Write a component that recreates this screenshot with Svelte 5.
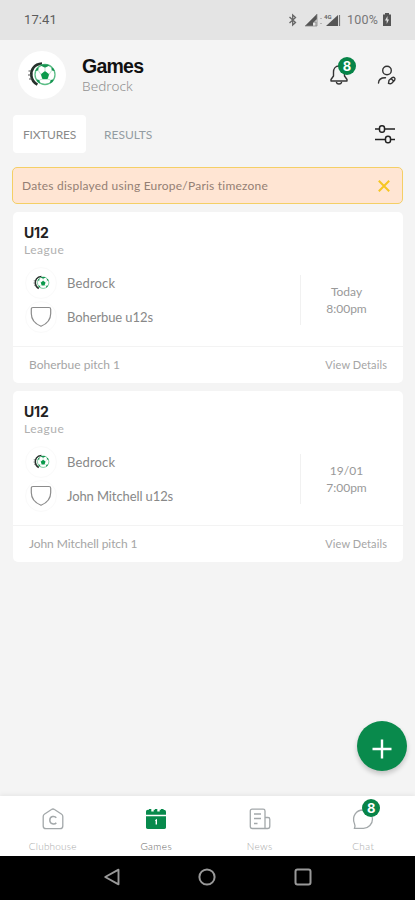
<script>
  const games = [
    { away: 'Boherbue u12s', day: 'Today', time: '8:00pm', pitch: 'Boherbue pitch 1', awaySpacing: -0.1, pitchSpacing: 0 },
    { away: 'John Mitchell u12s', day: '19/01', time: '7:00pm', pitch: 'John Mitchell pitch 1', awaySpacing: -0.1, pitchSpacing: -0.08 }
  ];
</script>

{#snippet ball(size)}
  <svg width={size} height={size} viewBox="0 0 28 28" fill="none">
    <path d="M13 2.600C5 3 1.500 9 2.400 15c.5 4 3 7 6 8.600" stroke="#26302b" stroke-width="2.600" />
    <path d="M2 10H-.5M2 14h-3M3 18H0" stroke="#555" stroke-width="1" />
    <circle cx="16" cy="13.500" r="10" fill="#fff" stroke="#5bbd86" stroke-width="1.300" />
    <path d="m16 10 4.200 3.300-1.600 5h-5.200l-1.600-5z" fill="#0a9a4b" />
    <path d="M11.500 4.500 16 6.700l4.500-2.200-2-1h-5zM6.300 10l3-.5.3-3-2 .9zM25.700 10l-3-.5-.3-3 2 .9zM7.500 18.500l3 .5.5 3.500-2.500-1.500zM24.500 18.500l-3 .5-.5 3.500 2.500-1.500z" fill="#169451" />
    <path d="M16 6.700v3.800M9.300 9.500l2.700 4M22.700 9.500l-2.700 4M10.500 19l3-1M21.500 19l-3-1" stroke="#a9dabd" stroke-width=".8" />
  </svg>
{/snippet}

<div class="screen">
  <div class="status">
    <span class="clock">17:41</span>
    <div class="indicators">
      <svg width="10" height="14" viewBox="0 0 10 14" fill="none" stroke="#666" stroke-width="1.300"><path d="m1.500 4 6 5.500L4.700 12V2l2.800 2.500-6 5.500" /></svg>
      <svg class="signal" width="38" height="14" viewBox="0 0 38 14">
        <path d="M1 13 13 1v5l-4 4v3z" fill="#555" /><path d="M1 13 13 1v12z" fill="none" stroke="#888" stroke-width=".8" />
        <path d="M10 9h2v4M17 5v1M17 10v1" stroke="#888" fill="none" />
        <path d="M22 13 34 2v11z" fill="#555" /><path d="M35.500 2v11" stroke="#777" stroke-width="1.200" />
        <text x="20" y="5.500" font-size="6" font-weight="700" fill="#666">4G</text>
      </svg>
      <span class="percent">100%</span>
      <svg width="10" height="14" viewBox="0 0 10 14"><path d="M3 0h4v1.500h2V13H1V1.500h2z" fill="#555" /><path d="M5.500 3 3 7.500h1.700V11L7 6.500H5.500z" fill="#e4e4e4" /></svg>
    </div>
  </div>

  <header>
    <div class="avatar">{@render ball(28)}</div>
    <div class="title">
      <h1>Games</h1>
      <p>Bedrock</p>
    </div>
    <div class="bell">
      <svg width="20" height="22" viewBox="0 0 20 22" fill="none" stroke="#333" stroke-width="1.400" stroke-linecap="round" stroke-linejoin="round"><path d="M10 2C6.200 2 4.500 5 4.500 8v4L2 15.500V17h16v-1.500L15.500 12V8c0-3-1.700-6-5.500-6z" /><path d="M7.500 18.500c.5 2 4.500 2 5 0" /></svg>
      <span class="badge">8</span>
    </div>
    <svg class="user" width="20" height="20" viewBox="0 0 20 20" fill="none" stroke="#333" stroke-width="1.400" stroke-linecap="round"><circle cx="10" cy="5.500" r="4.300" /><path d="M1.500 18c.2-3.500 3.200-5.300 7-5.200M11.500 18.300l.5-3 3.200-2.700c1.700-1 3.500.8 2.500 2.400L15 18c-1 .8-2.500.8-3.500.3zM14 13.500l2.800 2.800" /></svg>
  </header>

  <nav class="tabs">
    <span class="tab active">FIXTURES</span>
    <span class="tab">RESULTS</span>
    <svg width="20" height="20" viewBox="0 0 20 20" fill="none" stroke="#222" stroke-width="1.500"><path d="M0 5h4.500M9.500 5H20M0 15.500h10.500M15.500 15.500H20" /><rect x="4.500" y="1.800" width="5" height="6.400" rx="2.300" /><rect x="10.500" y="12.300" width="5" height="6.400" rx="2.300" /></svg>
  </nav>

  <div class="notice">
    <span>Dates displayed using Europe/Paris timezone</span>
    <svg width="12" height="12" viewBox="0 0 12 12" stroke="#f6c623" stroke-width="2"><path d="m.8.800 10.400 10.400M11.200.8.800 11.200" /></svg>
  </div>

  <main>
    {#each games as game}
      <article>
        <h2>U12</h2>
        <p class="league">League</p>
        <div class="match">
          <div class="teams">
            <div class="team"><span class="crest small">{@render ball(16)}</span><span class="home">Bedrock</span></div>
            <div class="team">
              <span class="crest"><svg width="22" height="22" viewBox="0 0 22 22" fill="none" stroke="#8c8c8c" stroke-width="1.200"><path d="M3 1.500h16c1.200 0 1.700.6 1.700 1.700v4.300c0 6-4.200 10.500-9.700 12.800C5.500 18 1.300 13.500 1.300 7.500V3.200C1.300 2.100 1.800 1.500 3 1.500z" /></svg></span>
              <span style:letter-spacing="{game.awaySpacing}px">{game.away}</span>
            </div>
          </div>
          <div class="when"><span>{game.day}</span><span>{game.time}</span></div>
        </div>
        <footer><span style:letter-spacing="{game.pitchSpacing}px">{game.pitch}</span><span class="details">View Details</span></footer>
      </article>
    {/each}
  </main>

  <button class="add" aria-label="Add"><svg width="20" height="20" viewBox="0 0 20 20" stroke="#fff" stroke-width="2.400"><path d="M10 .5v19M.5 10h19" /></svg></button>

  <nav class="bottom">
    <div class="item clubhouse">
      <svg width="22" height="22" viewBox="0 0 22 22" fill="none" stroke="#a3a8aa" stroke-width="1.300"><path d="M9.500 1.500 2.300 6.300C1.500 6.800 1.200 7.500 1.200 8.500V18c0 1.700 1 2.700 2.700 2.700h14.200c1.700 0 2.700-1 2.700-2.700V8.500c0-1-.3-1.700-1.100-2.200l-7.200-4.800c-1-.7-2-.7-3 0z" /><path d="M14.300 9.700c-1.500-2-6.500-1.800-6.500 2.500s5 4.500 6.500 2.500" stroke-width="1.500" /></svg>
      <span>Clubhouse</span>
    </div>
    <div class="item current">
      <svg width="22" height="22" viewBox="0 0 22 22" fill="#078a4c"><path d="M1 4c0-1.500.7-2.200 2-2.200h1V1h2.300v2.500h2.400V1.800H10V1h2.300v2.500h2.400V1.800H16V1h2.500v.8c1.700 0 2.500.7 2.500 2.200v2.800H1z" /><path d="M1 8.300h20v11c0 1-.6 1.700-1.700 1.700H2.700C1.600 21 1 20.300 1 19.300z" /><path d="m10.300 12.700 1-.7v4.500" fill="none" stroke="#fff" stroke-width="1.400" /></svg>
      <span>Games</span>
    </div>
    <div class="item">
      <svg width="22" height="22" viewBox="0 0 22 22" fill="none" stroke="#a3a8aa" stroke-width="1.300"><path d="M16 20.500H3.300c-1.400 0-2-.7-2-2V3c0-1.200.6-1.800 1.800-1.800h11.100c1.200 0 1.800.6 1.800 1.800v17.500zM16 9.500h3c1.200 0 1.800.6 1.800 1.800v7c0 1.400-.8 2.200-2.200 2.200H16" /><path d="M5 6h7M5 10.500h7M5 15.500h3.500" stroke-width="1.500" /></svg>
      <span>News</span>
    </div>
    <div class="item">
      <div class="chat">
        <svg width="22" height="22" viewBox="0 0 22 22" fill="none" stroke="#a3a8aa" stroke-width="1.300"><path d="M2.500 20.300c.7-2 .7-3.300-.2-5.300C-.2 8.500 4 2 11 2c5.500 0 9.500 4 9.500 9s-4 9.300-9 9.300z" /></svg>
        <span class="badge">8</span>
      </div>
      <span>Chat</span>
    </div>
  </nav>

  <div class="system">
    <svg width="16" height="18" viewBox="0 0 16 18" fill="none" stroke="#999" stroke-width="1.900" stroke-linejoin="round"><path d="M14.500 1.700v14.600L1.200 9z" /></svg>
    <svg width="18" height="18" viewBox="0 0 18 18" fill="none" stroke="#999" stroke-width="2"><circle cx="9" cy="9" r="7.600" /></svg>
    <svg width="18" height="18" viewBox="0 0 18 18" fill="none" stroke="#999" stroke-width="2"><rect x="1.500" y="1.500" width="15" height="15" rx="2" /></svg>
  </div>
</div>

<style>
  :global(body) { margin: 0; }
  .screen { position: relative; box-sizing: border-box; width: 415px; height: 900px; display: flex; flex-direction: column; overflow: hidden; background: #f4f4f4; font-family: Lato, "Liberation Sans", sans-serif; color: #888; white-space: nowrap; }
  svg { display: block; flex: none; overflow: visible; }
  h1, h2, p { margin: 0; }
  .status { height: 40px; flex: none; box-sizing: border-box; padding: 0 23px 1px 24px; display: flex; align-items: center; justify-content: space-between; background: #e4e4e4; font-family: Roboto, sans-serif; color: #5c5c5c; }
  .clock { font-size: 13px; letter-spacing: 0.1px; }
  .indicators { display: flex; align-items: center; }
  .signal { margin: 0 5px 0 6px; }
  .percent { font-size: 12.500px; letter-spacing: 0.2px; margin-right: 4px; color: #777; }
  header { height: 75px; flex: none; box-sizing: border-box; padding: 10px 18px 0; display: flex; align-items: flex-start; }
  .avatar { width: 48px; height: 48px; margin-top: 1px; padding-left: 2px; box-sizing: border-box; border-radius: 50%; background: #fff; display: flex; align-items: center; justify-content: center; }
  .title { margin: 5px auto 0 16px; font-family: "Liberation Sans", sans-serif; }
  h1 { font-size: 19.500px; line-height: 22px; letter-spacing: -0.750px; color: #111; }
  .title p { font-family: "Noto Sans", sans-serif; font-weight: 300; font-size: 13.500px; line-height: 19px; letter-spacing: 0.1px; color: #919191; }
  .bell { position: relative; margin: 14px 28px 0 0; }
  .badge { position: absolute; left: 9px; top: -7px; width: 18px; height: 18px; border-radius: 50%; background: #078448; color: #fff; font: 700 13px/18px Inter, sans-serif; letter-spacing: 0; text-align: center; }
  .user { margin-top: 15px; }
  .tabs { height: 38px; flex: none; display: flex; align-items: center; padding: 0 20px 0 13px; font-size: 12px; color: #939ca2; }
  .tab { height: 38px; line-height: 40px; padding: 0 18px; }
  .tab.active { width: 73px; padding: 0; text-align: center; background: #fff; border-radius: 4px; letter-spacing: -0.2px; color: #8a8a8a; }
  .tabs svg { margin-left: auto; }
  .notice { height: 37px; flex: none; box-sizing: border-box; margin: 14px 12px 0; border: 1.500px solid #f4cf65; border-radius: 5px; background: #ffe5d3; padding: 0 12px 0 9px; display: flex; align-items: center; justify-content: space-between; font-size: 12px; letter-spacing: 0.220px; color: #947f73; }
  main { display: flex; flex-direction: column; gap: 8px; padding: 7.500px 12px 0 13px; flex: 1; min-height: 0; }
  article { height: 171px; flex: none; box-sizing: border-box; padding: 11px 0 0; background: #fff; border-radius: 5px; display: flex; flex-direction: column; }
  h2 { margin-left: 11px; font: 700 14px/19px Inter, "Liberation Sans", sans-serif; letter-spacing: -0.2px; color: #222; }
  .league { margin-left: 11px; font-size: 12px; line-height: 16px; letter-spacing: 0.5px; color: #b0b0b0; }
  .match { display: flex; justify-content: space-between; padding: 8px 0 0 12px; flex: 1; min-height: 0; box-sizing: border-box; }
  .teams { display: flex; flex-direction: column; }
  .team { display: flex; align-items: center; height: 34px; gap: 10px; font-size: 13px; color: #888; }
  .home { letter-spacing: 0.150px; }
  .crest { width: 32px; height: 32px; box-sizing: border-box; border: 1px solid #fafafa; border-radius: 50%; display: flex; align-items: center; justify-content: center; }
  .crest.small { padding-left: 2px; }
  .when { width: 103px; height: 50px; margin-top: 9px; box-sizing: border-box; border-left: 1px solid #f1f1f1; display: flex; flex-direction: column; justify-content: center; align-items: center; padding-right: 11px; font-size: 12px; line-height: 17px; color: #999; }
  article footer { height: 37px; flex: none; box-sizing: border-box; border-top: 1px solid #f3f3f3; display: flex; align-items: center; justify-content: space-between; padding: 0 16px 1px; font-size: 12px; color: #a5a5a5; }
  .details { font-size: 11px; letter-spacing: 0.1px; }
  .add { position: absolute; left: 357px; top: 721px; width: 50px; height: 50px; padding: 5px 0 0; box-sizing: border-box; border: 0; border-radius: 50%; background: #098a4c; box-shadow: 0 3px 5px #0003; display: flex; align-items: center; justify-content: center; }
  .bottom { height: 60px; flex: none; display: flex; background: #fff; box-shadow: 0 -1px 5px #0001; }
  .item { flex: 1; display: flex; flex-direction: column; align-items: center; padding-top: 12px; gap: 8px; font: 300 10px/16px Lato, sans-serif; letter-spacing: 0.4px; color: #aaa; }
  .clubhouse { padding-left: 1px; letter-spacing: 0.2px; }
  .item.current { color: #666; }
  .chat { position: relative; }
  .chat .badge { left: 10px; top: -9px; }
  .system { height: 44px; flex: none; box-sizing: border-box; padding: 0 103px 3px 104px; display: flex; align-items: center; justify-content: space-between; background: #000; }
</style>
